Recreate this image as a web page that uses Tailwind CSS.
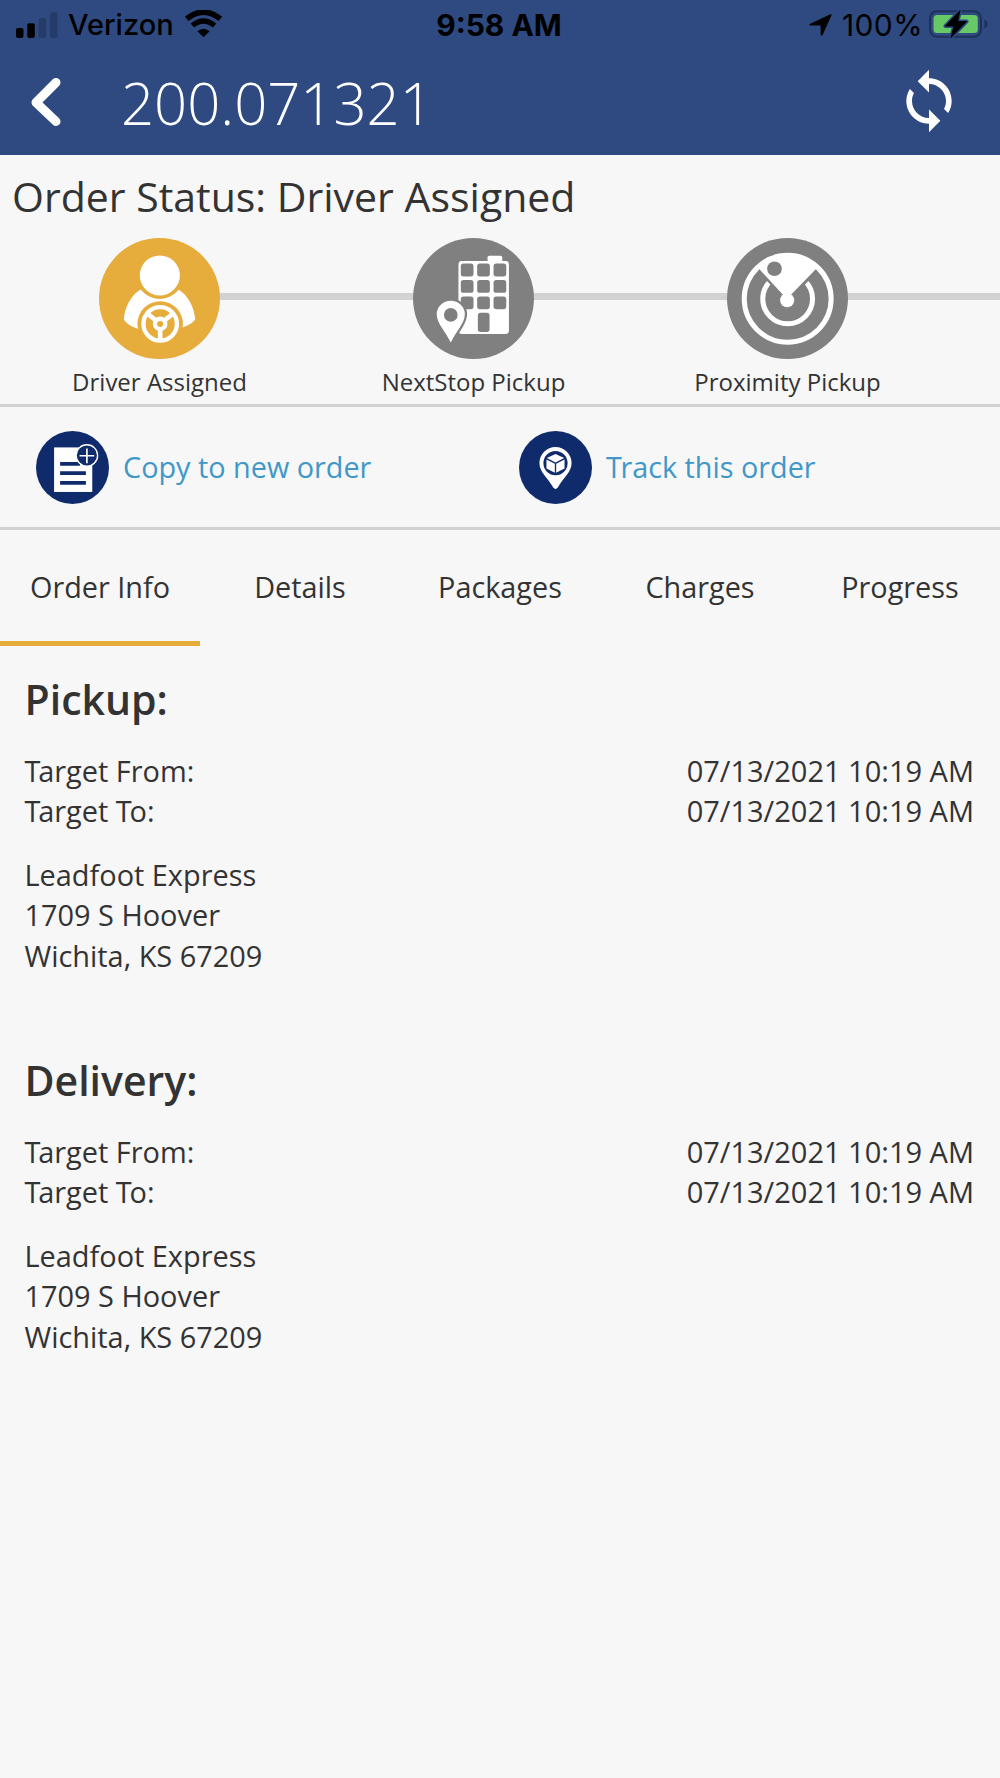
<!DOCTYPE html>
<html lang="en">
<head>
    <meta charset="UTF-8">
    <meta name="viewport" content="width=device-width, initial-scale=1.0">
    <title>Order 200.071321</title>
    <script src="https://cdn.jsdelivr.net/npm/@tailwindcss/browser@4"></script>
</head>
<body class="bg-[#f7f7f7] text-[#333333] font-['Open_Sans',sans-serif] overflow-hidden">
    <div class="w-[1000px] h-[1778px] flex flex-col overflow-hidden">
        <header class="h-[154.5px] shrink-0 bg-[#2e4a80]">
            <!-- Status bar -->
            <div class="h-[50px] grid grid-cols-3 items-center text-black font-['Inter',sans-serif] text-[29px] leading-[50px]">
                <div class="flex items-center pl-4">
                    <svg class="w-[42px] h-[26px] mt-[-1px]" viewBox="0 0 42 26">
                        <rect x="0" y="16" width="7.5" height="10" rx="2"/>
                        <rect x="11.3" y="11.3" width="7.5" height="14.7" rx="2"/>
                        <rect x="22.6" y="6" width="7.5" height="20" rx="2" fill="#263c68"/>
                        <rect x="34" y="0.3" width="7.5" height="25.7" rx="2" fill="#263c68"/>
                    </svg>
                    <span class="ml-[10px] font-medium">Verizon</span>
                    <svg class="w-[37px] h-[27px] ml-[11px] -mt-[3px]" viewBox="0 0 110 80">
                        <path d="M5 26Q55 -14 105 26" fill="none" stroke="#000" stroke-width="17"/>
                        <path d="M22 46Q55 19 88 46" fill="none" stroke="#000" stroke-width="16"/>
                        <path d="M37 63Q55 48 73 63L55 81Z"/>
                    </svg>
                </div>
                <div class="text-center text-[30px] font-bold -ml-[2px]">9:58 AM</div>
                <div class="flex items-center justify-end pr-[12px]">
                    <svg class="w-[23px] h-[22px]" viewBox="0 0 23 22">
                        <path d="M21.5 0.3Q23 0 22.4 1.6L13.6 21Q12.4 22.6 11.6 20.6V11.6H1.6Q-0.6 11 1.2 9.8Z"/>
                    </svg>
                    <span class="ml-[10px] text-[30px] tracking-[0.4px]">100%</span>
                    <svg class="w-[59px] h-[28px] ml-[6px] -mt-[2px]" viewBox="0 0 59 28">
                        <rect x="1" y="1.3" width="51" height="25.4" rx="7" fill="none" stroke="#1f3158" stroke-width="2"/>
                        <path d="M55.5 9.5Q58.5 11 58.5 14T55.5 18.5Z" fill="#1f3158"/>
                        <rect x="4.5" y="5" width="44.3" height="18" rx="3.5" fill="#66c965"/>
                        <path d="M31 0.5L16.5 16H25.2L22 27.5L37.5 11.5H28.5Z" stroke="#2e4a80" stroke-width="4" stroke-linejoin="round"/>
                        <path d="M31 0.5L16.5 16H25.2L22 27.5L37.5 11.5H28.5Z" stroke="#000" stroke-width="1" stroke-linejoin="round"/>
                    </svg>
                </div>
            </div>
            <!-- Title bar -->
            <div class="h-[104px] flex items-center text-white">
                <svg class="w-[30px] h-[50px] ml-[31px]" viewBox="0 0 30 50">
                    <path d="M25 5.5L5 25.5L25 44.5" fill="none" stroke="#fff" stroke-width="9" stroke-linecap="round" stroke-linejoin="round"/>
                </svg>
                <h1 class="ml-[60px] pt-px text-[58px] leading-[80px] font-light">200.071321</h1>
                <svg class="w-[68px] h-[68px] ml-auto mr-[37.5px] mt-[-2px] fill-white" viewBox="0 0 24 24">
                    <path d="M12 4V1L8 5l4 4V6c3.31 0 6 2.69 6 6 0 1.01-.25 1.97-.7 2.8l1.46 1.46C19.54 15.03 20 13.57 20 12c0-4.42-3.58-8-8-8zm0 14c-3.31 0-6-2.69-6-6 0-1.01.25-1.97.7-2.8L5.24 7.74C4.46 8.97 4 10.43 4 12c0 4.42 3.58 8 8 8v3l4-4-4-4v3z"/>
                </svg>
            </div>
        </header>

        <!-- Order status -->
        <section class="h-[252px] shrink-0 pt-[12px] border-b-3 border-[#d2d2d2]">
            <h2 class="pl-3 text-[41px] leading-[58px]">Order Status: Driver Assigned</h2>
            <div class="relative mt-[13px]">
                <div class="absolute left-[160px] right-0 top-[55.5px] h-[7px] bg-[#d2d2d2]"></div>
                <div class="relative grid grid-cols-[314px_314px_314px] ml-[2.5px] text-2xl leading-8 text-center">
                    <div class="flex flex-col items-center gap-[7.5px]">
                        <svg class="w-[121px] h-[121px]" viewBox="28 22 362 362">
                            <circle cx="209" cy="203" r="181" fill="#e6ac3c"/>
                            <path d="M152 176C124 194 106 226 102 266Q114 285 146 294L277 290Q304 282 316 266C312 226 294 194 266 176Q209 232 152 176Z" fill="#fff"/>
                            <circle cx="210" cy="134" r="70" fill="#e6ac3c"/>
                            <circle cx="210" cy="134" r="60" fill="#fff"/>
                            <circle cx="211" cy="279" r="68" fill="#e6ac3c"/>
                            <circle cx="211" cy="279" r="50" fill="none" stroke="#fff" stroke-width="13"/>
                            <path d="M211 279L175 250M211 279L247 250M211 279V328" stroke="#fff" stroke-width="14"/>
                            <circle cx="211" cy="279" r="22" fill="#fff"/>
                            <circle cx="211" cy="279" r="9" fill="#e6ac3c"/>
                        </svg>
                        <span>Driver Assigned</span>
                    </div>
                    <div class="flex flex-col items-center gap-[7.5px]">
                        <svg class="w-[121px] h-[121px]" viewBox="39 22 362 362">
                            <circle cx="220" cy="203" r="181" fill="#808080"/>
                            <rect x="262" y="75" width="44" height="30" rx="5" fill="#fff"/>
                            <rect x="175" y="91" width="151" height="218" rx="10" fill="#fff"/>
                            <g fill="#808080">
                                <rect x="182" y="98" width="38" height="39" rx="8"/>
                                <rect x="231" y="98" width="38" height="39" rx="8"/>
                                <rect x="280" y="98" width="38" height="39" rx="8"/>
                                <rect x="182" y="148" width="38" height="38" rx="8"/>
                                <rect x="231" y="148" width="38" height="38" rx="8"/>
                                <rect x="280" y="148" width="38" height="38" rx="8"/>
                                <rect x="182" y="197" width="38" height="38" rx="8"/>
                                <rect x="231" y="197" width="38" height="38" rx="8"/>
                                <rect x="280" y="197" width="38" height="38" rx="8"/>
                                <rect x="233" y="246" width="35" height="57" rx="8"/>
                            </g>
                            <path d="M152 335C136 300 110 278 110 250A42 40 0 0 1 194 250C194 278 168 300 152 335Z" fill="#fff" stroke="#808080" stroke-width="14" paint-order="stroke"/>
                            <circle cx="152" cy="252" r="20.5" fill="#808080"/>
                        </svg>
                        <span>NextStop Pickup</span>
                    </div>
                    <div class="flex flex-col items-center gap-[7.5px]">
                        <svg class="w-[121px] h-[121px]" viewBox="51 22 362 362">
                            <circle cx="232" cy="203" r="181" fill="#808080"/>
                            <circle cx="232.5" cy="204" r="74.5" fill="none" stroke="#fff" stroke-width="15"/>
                            <path d="M232 216L140 118L232 80L326 118Z" fill="#808080"/>
                            <circle cx="232.5" cy="204" r="130" fill="none" stroke="#fff" stroke-width="15"/>
                            <path d="M226 200L142 109A130 130 0 0 1 323 109L238 196Z" fill="#fff"/>
                            <circle cx="231" cy="208" r="21" fill="#fff"/>
                            <circle cx="193" cy="114" r="22" fill="#808080"/>
                        </svg>
                        <span>Proximity Pickup</span>
                    </div>
                </div>
            </div>
        </section>

        <!-- Actions -->
        <section class="h-[123px] shrink-0 grid grid-cols-[483px_1fr] items-center pt-px border-b-3 border-[#d2d2d2] text-[28.8px] leading-10 text-[#4097c8]">
            <a class="flex items-center gap-[14px] pl-9">
                <svg class="w-[73px] h-[73px]" viewBox="48 92 218 218">
                    <circle cx="157" cy="201" r="109" fill="#0f2b6c"/>
                    <rect x="102" y="141" width="114" height="133" fill="#fff"/>
                    <path d="M120 190H180M120 218H197M120 247H197" stroke="#0f2b6c" stroke-width="11"/>
                    <circle cx="200" cy="165" r="32" fill="#0f2b6c" stroke="#fff" stroke-width="4"/>
                    <path d="M200 144V188M178 166H222" stroke="#fff" stroke-width="5"/>
                </svg>
                <span>Copy to new order</span>
            </a>
            <a class="flex items-center gap-[14px] pl-9">
                <svg class="w-[73px] h-[73px]" viewBox="58 92 218 218">
                    <circle cx="167" cy="201" r="109" fill="#0f2b6c"/>
                    <path d="M167 265C162 265 159 259 156 254C144 232 119 214 119 188A48 48 0 0 1 215 188C215 214 190 232 178 254C175 259 172 265 167 265Z" fill="#fff"/>
                    <circle cx="167" cy="188" r="36" fill="#0f2b6c"/>
                    <path d="M167 161L193 173L167 186L141 173ZM140 177L165 190V217L140 204ZM194 177L169 190V217L194 204Z" fill="#fff"/>
                </svg>
                <span><span class="tracking-[-1.5px]">T</span>rack this order</span>
            </a>
        </section>

        <!-- Tabs -->
        <nav class="h-[116.5px] shrink-0 grid grid-cols-5 text-[28.8px] leading-10 text-center">
            <a class="pt-[37.5px] border-b-5 border-[#e6ac3c]">Order Info</a>
            <a class="pt-[37.5px]">Details</a>
            <a class="pt-[37.5px]">Packages</a>
            <a class="pt-[37.5px]">Charges</a>
            <a class="pt-[37.5px]">Progress</a>
        </nav>

        <main class="pl-[24.5px] pr-[26px] pt-[25.5px] text-[28.9px] leading-[40.3px]">
            <section class="h-[381px]">
                <h3 class="text-[41px] leading-[54px] font-semibold">Pickup:</h3>
                <div class="mt-[25px] flex justify-between">
                    <span><span class="tracking-[-2.2px]">T</span>arget From:</span>
                    <span class="text-[29px]">07/13/2021 10:19 AM</span>
                </div>
                <div class="flex justify-between">
                    <span><span class="tracking-[-2.2px]">T</span>arget <span class="tracking-[-2.2px]">T</span>o:</span>
                    <span class="text-[29px]">07/13/2021 10:19 AM</span>
                </div>
                <address class="mt-6 not-italic">
                    Leadfoot Express<br>
                    1709 S Hoover<br>
                    Wichita, KS 67209
                </address>
            </section>
            <section class="h-[381px]">
                <h3 class="text-[41px] leading-[54px] font-semibold">Delivery:</h3>
                <div class="mt-[25px] flex justify-between">
                    <span><span class="tracking-[-2.2px]">T</span>arget From:</span>
                    <span class="text-[29px]">07/13/2021 10:19 AM</span>
                </div>
                <div class="flex justify-between">
                    <span><span class="tracking-[-2.2px]">T</span>arget <span class="tracking-[-2.2px]">T</span>o:</span>
                    <span class="text-[29px]">07/13/2021 10:19 AM</span>
                </div>
                <address class="mt-6 not-italic">
                    Leadfoot Express<br>
                    1709 S Hoover<br>
                    Wichita, KS 67209
                </address>
            </section>
        </main>
    </div>
</body>
</html>
